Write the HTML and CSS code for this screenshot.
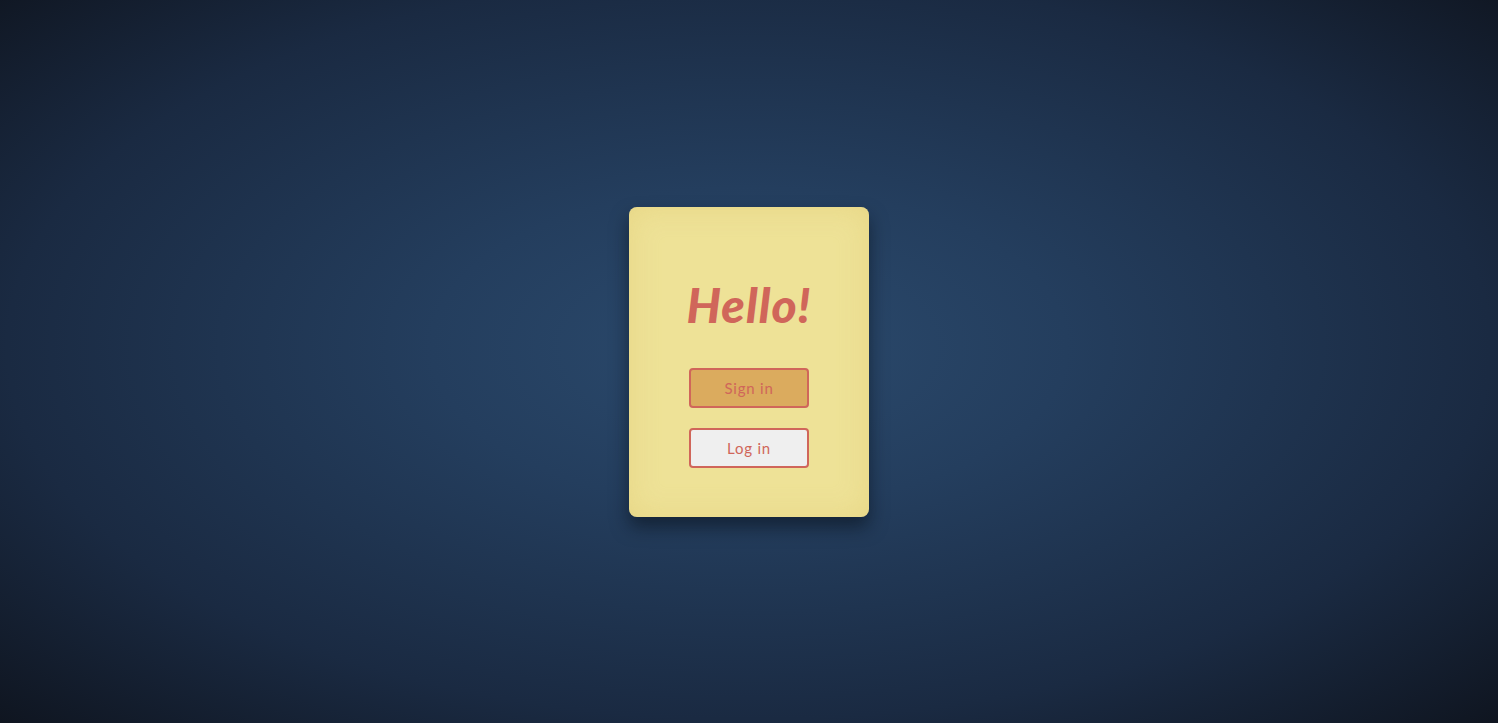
FILE: index.html
```html
<!DOCTYPE html>
<html lang="en">
<head>
<meta charset="utf-8">
<title>Hello</title>
<link rel="stylesheet" href="styles.css">
</head>
<body>
<main class="card">
  <h1 class="title">Hello!</h1>
  <button class="btn btn-sign">Sign in</button>
  <button class="btn btn-log">Log in</button>
</main>
</body>
</html>
```

FILE: styles.css
```css
html, body {
  height: 100%;
}
body {
  margin: 0;
  display: flex;
  align-items: center;
  justify-content: center;
  background: radial-gradient(ellipse at 50% 48%, #2b4a6d 0%, #243e5e 30%, #1a2a42 70%, #0f1520 100%);
  font-family: "Lato", "Noto Sans", sans-serif;
}
.card {
  width: 240px;
  height: 310px;
  box-sizing: border-box;
  border-radius: 8px;
  background: #eee297;
  box-shadow: inset 0 0 30px rgba(225, 200, 110, 0.45), 0 10px 18px rgba(8, 14, 24, 0.55);
  display: flex;
  flex-direction: column;
  align-items: center;
  padding-top: 68px;
  gap: 20px;
}
.title {
  margin: 0 0 13px;
  font-size: 48px;
  line-height: 60px;
  font-weight: 900;
  font-style: italic;
  color: #d0665a;
  letter-spacing: 1px;
}
.btn {
  width: 120px;
  height: 40px;
  border: 2px solid #d0665a;
  border-radius: 4px;
  font-family: "Lato", "Noto Sans", sans-serif;
  font-size: 15px;
  color: #d0665a;
  letter-spacing: 0.8px;
  padding: 0;
}
.btn-sign {
  background: #dbab5e;
}
.btn-log {
  background: #efefef;
}
```
